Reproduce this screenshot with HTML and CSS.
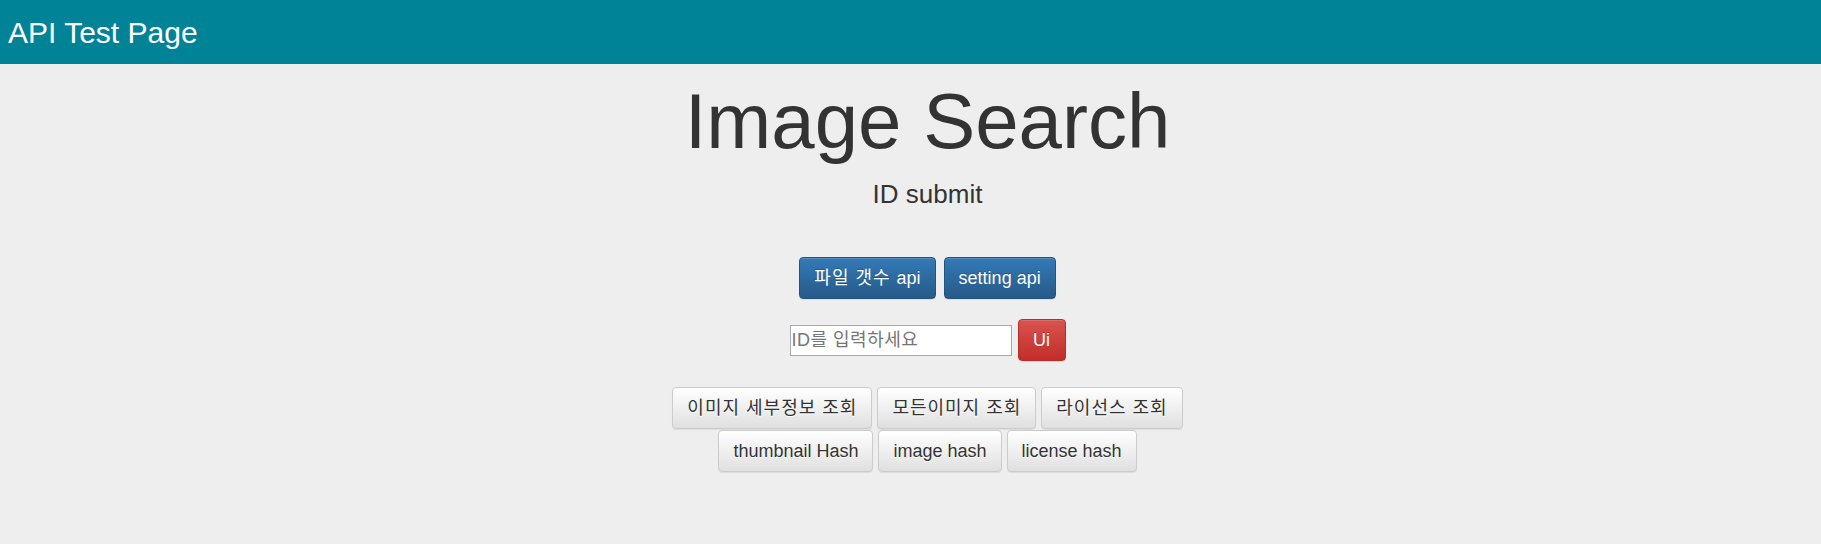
FILE: index.html
```html
<!DOCTYPE html>
<html lang="ko">
<head>
<meta charset="utf-8">
<title>API Test Page</title>
<link rel="stylesheet" href="styles.css">
</head>
<body>
<header class="navbar">
  <span class="brand">API Test Page</span>
</header>
<main class="main">
  <h1 class="title">Image Search</h1>
  <h3 class="subtitle">ID submit</h3>
  <div class="row row-api">
    <button class="btn btn-primary"><span class="ko">파일 갯수 </span>api</button>
    <button class="btn btn-primary">setting api</button>
  </div>
  <div class="row row-input">
    <input class="id-input" type="text" placeholder="ID를 입력하세요">
    <button class="btn btn-danger">Ui</button>
  </div>
  <div class="row row-query">
    <button class="btn btn-default"><span class="ko">이미지 세부정보 조회</span></button>
    <button class="btn btn-default"><span class="ko">모든이미지 조회</span></button>
    <button class="btn btn-default"><span class="ko">라이선스 조회</span></button>
  </div>
  <div class="row row-hash">
    <button class="btn btn-default">thumbnail Hash</button>
    <button class="btn btn-default">image hash</button>
    <button class="btn btn-default">license hash</button>
  </div>
</main>
</body>
</html>
```

FILE: styles.css
```css
html, body {
  margin: 0;
  padding: 0;
}
body {
  background: #eeeeee;
  font-family: "Liberation Sans", Arial, "Noto Sans CJK KR", sans-serif;
  color: #333333;
  width: 1821px;
  height: 544px;
  overflow: hidden;
}
.navbar {
  box-sizing: border-box;
  height: 64px;
  background: #008397;
  padding: 2px 0 0 8px;
}
.brand {
  display: block;
  color: #ffffff;
  font-size: 30px;
  line-height: 62px;
}
.main {
  display: flex;
  flex-direction: column;
  align-items: center;
  padding-left: 34px;
}
.title {
  margin: 13px 0 0;
  font-size: 78px;
  font-weight: 400;
  line-height: 88px;
  color: #333333;
}
.subtitle {
  margin: 14px 0 0;
  font-size: 26px;
  font-weight: 400;
  line-height: 30px;
  color: #333333;
}
.row {
  display: flex;
  align-items: center;
  justify-content: center;
}
.row-api {
  margin-top: 48px;
  gap: 8px;
}
.row-input {
  margin-top: 20px;
  gap: 6px;
}
.row-query {
  margin-top: 26px;
  gap: 5px;
}
.row-hash {
  margin-top: 1px;
  gap: 5px;
}
.btn {
  box-sizing: border-box;
  height: 42px;
  padding: 0 14px;
  font-family: "Liberation Sans", Arial, "Noto Sans CJK KR", sans-serif;
  font-size: 18px;
  line-height: 40px;
  border: 1px solid transparent;
  border-radius: 4px;
  cursor: pointer;
  white-space: nowrap;
}
.ko {
  letter-spacing: 1px;
}
.btn-primary {
  color: #ffffff;
  background: linear-gradient(to bottom, #337ab7 0%, #265a88 100%);
  border-color: #245580;
  text-shadow: 0 -1px 0 rgba(0, 0, 0, 0.2);
  box-shadow: inset 0 1px 0 rgba(255, 255, 255, 0.15), 0 1px 1px rgba(0, 0, 0, 0.075);
}
.btn-danger {
  color: #ffffff;
  background: linear-gradient(to bottom, #d9534f 0%, #c12e2a 100%);
  border-color: #b92c28;
  text-shadow: 0 -1px 0 rgba(0, 0, 0, 0.2);
  box-shadow: inset 0 1px 0 rgba(255, 255, 255, 0.15), 0 1px 1px rgba(0, 0, 0, 0.075);
  width: 48px;
  padding: 0;
}
.btn-default {
  color: #333333;
  background: linear-gradient(to bottom, #ffffff 0%, #e0e0e0 100%);
  border-color: #cccccc;
  text-shadow: 0 1px 0 #ffffff;
  box-shadow: inset 0 1px 0 rgba(255, 255, 255, 0.15), 0 1px 1px rgba(0, 0, 0, 0.075);
}
.id-input {
  box-sizing: border-box;
  width: 222px;
  height: 31px;
  margin: 0;
  padding: 0 1px;
  border: 1px solid #a9a9a9;
  background: #ffffff;
  font-family: "Liberation Sans", Arial, "Noto Sans CJK KR", sans-serif;
  font-size: 18px;
  color: #333333;
  outline: none;
}
.id-input::placeholder {
  color: #757575;
  letter-spacing: 0.5px;
}
```
